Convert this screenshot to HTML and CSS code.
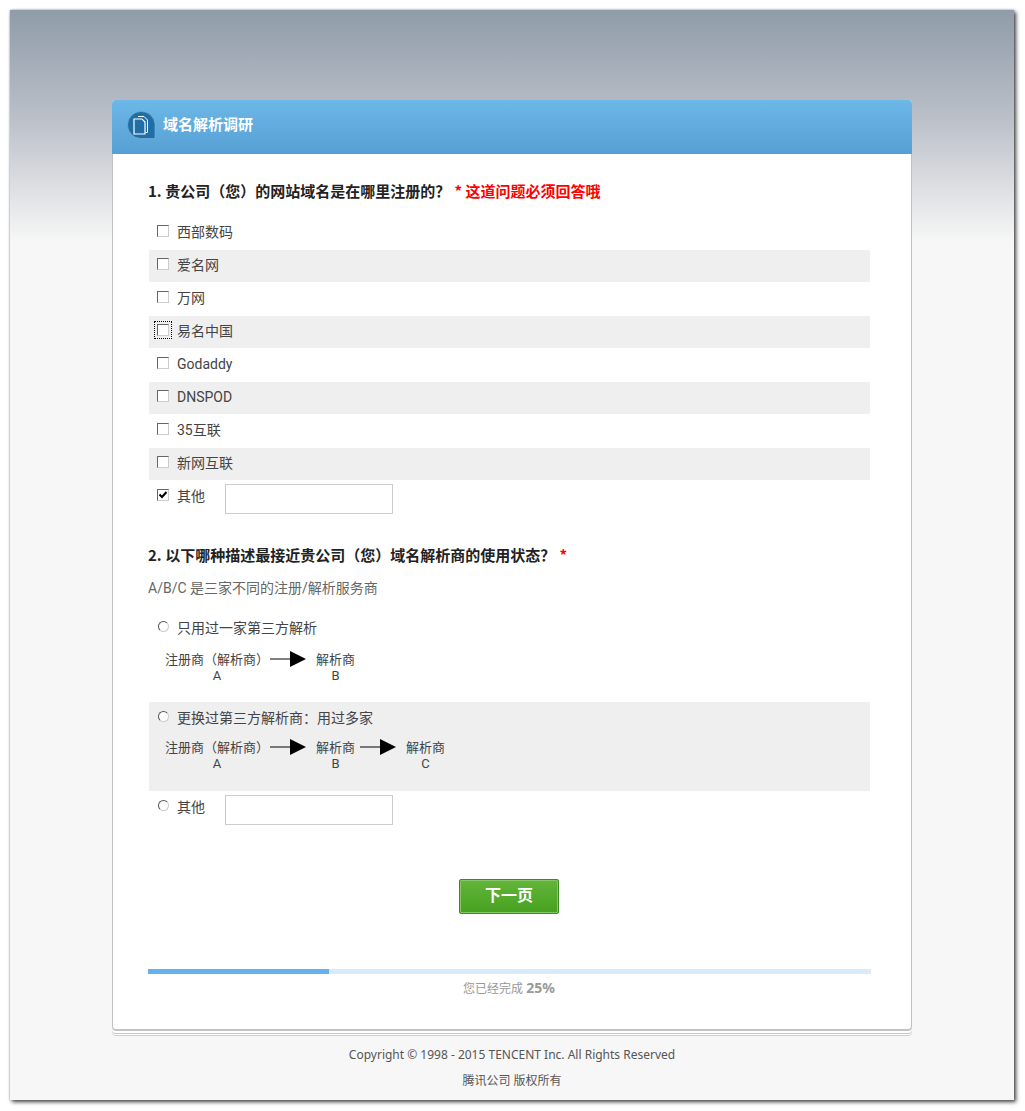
FILE: index.html
```
<!DOCTYPE html>
<html>
<head>
	<title>域名解析调研</title>
	<meta charset="utf-8">
	<link rel="stylesheet" href="styles.css">
</head>
<body>
<div id="main">
	<div class="card">
		<div class="card-head">
			<svg class="logo" width="29" height="29" viewBox="0 0 29 29">
				<path d="M14 .5a13.5 13.5 0 1 0 0 27h14v-14A13.500 13.500 0 0 0 14 .5z" fill="#1f6ea6" stroke="#7fb9de" stroke-width=".6"/>
				<path d="M11 5.500h6l3.500 3.500v12.500h-2" fill="none" stroke="#fff" stroke-width="1"/>
				<path d="M7 8h8l3 3v12H7z" fill="#1f6ea6" stroke="#fff" stroke-width="1.200"/>
			</svg>
			<h1>域名解析调研</h1>
		</div>
		<div class="card-body">
			<h2>1. 贵公司（您）的网站域名是在哪里注册的？ <em>* 这道问题必须回答哦</em></h2>
			<div class="opt"><span class="check"></span>西部数码</div>
			<div class="opt grey"><span class="check"></span>爱名网</div>
			<div class="opt"><span class="check"></span>万网</div>
			<div class="opt grey"><span class="check focus"></span>易名中国</div>
			<div class="opt"><span class="check"></span>Godaddy</div>
			<div class="opt grey"><span class="check"></span>DNSPOD</div>
			<div class="opt"><span class="check"></span>35互联</div>
			<div class="opt grey"><span class="check"></span>新网互联</div>
			<div class="opt other"><span class="check"><svg width="10" height="10" viewBox="0 0 10 10"><path d="M1.500 4.500l2.500 2.500 4.500-5" fill="none" stroke="#000" stroke-width="2"/></svg></span><span class="other-label">其他</span><input class="text" type="text"></div>

			<h2 class="q2">2. 以下哪种描述最接近贵公司（您）域名解析商的使用状态？ <em>*</em></h2>
			<p class="tip">A/B/C 是三家不同的注册/解析服务商</p>

			<div class="opt radio-opt"><span class="radio"></span>只用过一家第三方解析</div>
			<div class="flow">
				<div class="node first">注册商（解析商）<span class="letter">A</span></div>
				<svg class="arrow" width="36" height="16" viewBox="0 0 36 16"><path d="M0 8h21" stroke="#000"/><path d="M20 0l16 8-16 8z"/></svg>
				<div class="node">解析商<span class="letter">B</span></div>
			</div>

			<div class="block grey">
				<div class="opt radio-opt"><span class="radio"></span>更换过第三方解析商：用过多家</div>
				<div class="flow">
					<div class="node first">注册商（解析商）<span class="letter">A</span></div>
					<svg class="arrow" width="36" height="16" viewBox="0 0 36 16"><path d="M0 8h21" stroke="#000"/><path d="M20 0l16 8-16 8z"/></svg>
					<div class="node">解析商<span class="letter">B</span></div>
					<svg class="arrow" width="36" height="16" viewBox="0 0 36 16"><path d="M0 8h21" stroke="#000"/><path d="M20 0l16 8-16 8z"/></svg>
					<div class="node">解析商<span class="letter">C</span></div>
				</div>
			</div>
			<div class="opt other other2"><span class="radio"></span><span class="other-label">其他</span><input class="text" type="text"></div>

			<div class="btn-wrap"><a class="btn">下一页</a></div>

			<div class="progress"><div class="bar" style="width:25%"></div></div>
			<p class="done">您已经完成 <b>25%</b></p>
		</div>
	</div>
	<div class="foot">
		<p>Copyright © 1998 - 2015 TENCENT Inc. All Rights Reserved</p>
		<p>腾讯公司 版权所有</p>
	</div>
</div>
</body>
</html>
```

FILE: styles.css
```
*{
	margin: 0;
	padding: 0;
	box-sizing: border-box;
}
body{
	padding: 10px 0 11px 10px;
	background: #fff;
	font-family: Roboto, "Noto Sans CJK SC", sans-serif;
	font-size: 14px;
	color: #444;
	text-spacing-trim: space-all;
}
#main{
	width: 1004px;
	height: 1090px;
	padding-top: 90px;
	background: #f7f7f7 linear-gradient(#8f9ca9, #b9bec7 45%, #f7f7f7) no-repeat;
	background-size: 100% 232px;
	box-shadow: 2px 2px 4px #444, 0 0 2px #aaa;
}
.card{
	width: 800px;
	margin: 0 auto;
	border-radius: 4px;
	background: #fff;
	box-shadow: 0 1px 0 #c4c4c4, 0 3px 0 #fff, 0 4px 0 #c8c8c8, 0 5px 0 #fff, 0 6px 0 #cfcfcf;
}
.card-head{
	display: flex;
	align-items: center;
	height: 54px;
	padding: 0 0 4px 15px;
	border-radius: 4px 4px 0 0;
	background: linear-gradient(#6cb8e7, #569fd4);
}
.card-head .logo{
	margin-right: 7px;
}
.card-head h1{
	margin-top: -4px;
	font-size: 15px;
	font-weight: bold;
	color: #fff;
	font-family: "Noto Sans CJK SC", sans-serif;
}
.card-body{
	height: 876px;
	padding: 25px 41px 0 35px;
	border: 1px solid #c0c0c0;
	border-top: 0;
	border-radius: 0 0 4px 4px;
}
h2{
	height: 24px;
	margin-bottom: 14px;
	font-size: 15px;
	line-height: 24px;
	font-weight: bold;
	color: #222;
	font-family: "Noto Sans CJK SC", sans-serif;
}
h2 em{
	font-style: normal;
	color: #f00;
	margin-left: 1px;
}
.opt{
	display: flex;
	height: 32px;
	margin: 0 0 1px 1px;
	padding-left: 8px;
	line-height: 31px;
	color: #444;
}
.grey{
	background: #efefef;
}
.check{
	flex: none;
	width: 12px;
	height: 12px;
	margin: 8px 8px 0 0;
	border: 1px solid;
	border-color: #666 #ccc #ccc #666;
	background: #fff;
	line-height: 0;
}
.focus{
	outline: 1px dotted #000;
	outline-offset: 2px;
}
.radio{
	flex: none;
	width: 11px;
	height: 11px;
	margin: 8px 8px 0 1px;
	border: 1px solid;
	border-color: #555 #ccc #ccc #555;
	border-radius: 50%;
	background: #fff;
}
.other{
	height: 33px;
}
.other-label{
	width: 48px;
}
.text{
	width: 168px;
	height: 30px;
	margin-top: 3px;
	border: 1px solid #ccc;
	background: #fff;
}
.q2{
	margin: 29px 0 9px;
}
.tip{
	height: 24px;
	line-height: 24px;
	margin-bottom: 13px;
	color: #666;
}
.radio-opt{
	height: 31px;
	line-height: 30px;
	margin: 0 0 0 1px;
}
.flow{
	display: flex;
	align-items: flex-start;
	height: 44px;
	padding: 7px 0 0 17px;
	font-size: 13px;
	line-height: 15px;
	font-family: "Noto Sans CJK SC", sans-serif;
	color: #444;
}
.node{
	text-align: center;
	margin-right: 5px;
}
.node.first{
	margin-right: 1px;
}
.letter{
	display: block;
	margin-top: 2px;
	font-family: Roboto, sans-serif;
}
.arrow{
	margin: 0 10px 0 0;
}
.block{
	height: 89px;
	margin: 14px 0 1px 1px;
	padding-top: 1px;
}
.block .radio-opt{
	height: 32px;
	margin-left: 0;
}
.block .flow{
	padding: 4px 0 0 16px;
}
.other2{
	margin-top: 0;
}
.btn-wrap{
	text-align: center;
	margin-top: 54px;
}
.btn{
	display: inline-block;
	width: 100px;
	height: 35px;
	border: 1px solid #3d8a1e;
	border-radius: 2px;
	background: linear-gradient(#62b53a, #47a11f);
	box-shadow: inset 0 0 0 1px #85c765;
	color: #fff;
	font-size: 16px;
	font-weight: bold;
	line-height: 29px;
	font-family: "Noto Sans CJK SC", sans-serif;
}
.progress{
	height: 5px;
	margin: 55px -1px 0 0;
	background: #d9ebf9;
}
.bar{
	height: 5px;
	background: #63b1ee;
}
.done{
	margin-top: 5px;
	text-align: center;
	font-size: 12px;
	line-height: 18px;
	color: #999;
	font-family: "Noto Sans", "Noto Sans CJK SC", sans-serif;
}
.done b{
	font-size: 14px;
}
.foot{
	margin-top: 12px;
	text-align: center;
	font-size: 12px;
	line-height: 26px;
	color: #555;
	font-family: "Noto Sans", "Noto Sans CJK SC", sans-serif;
}
```
